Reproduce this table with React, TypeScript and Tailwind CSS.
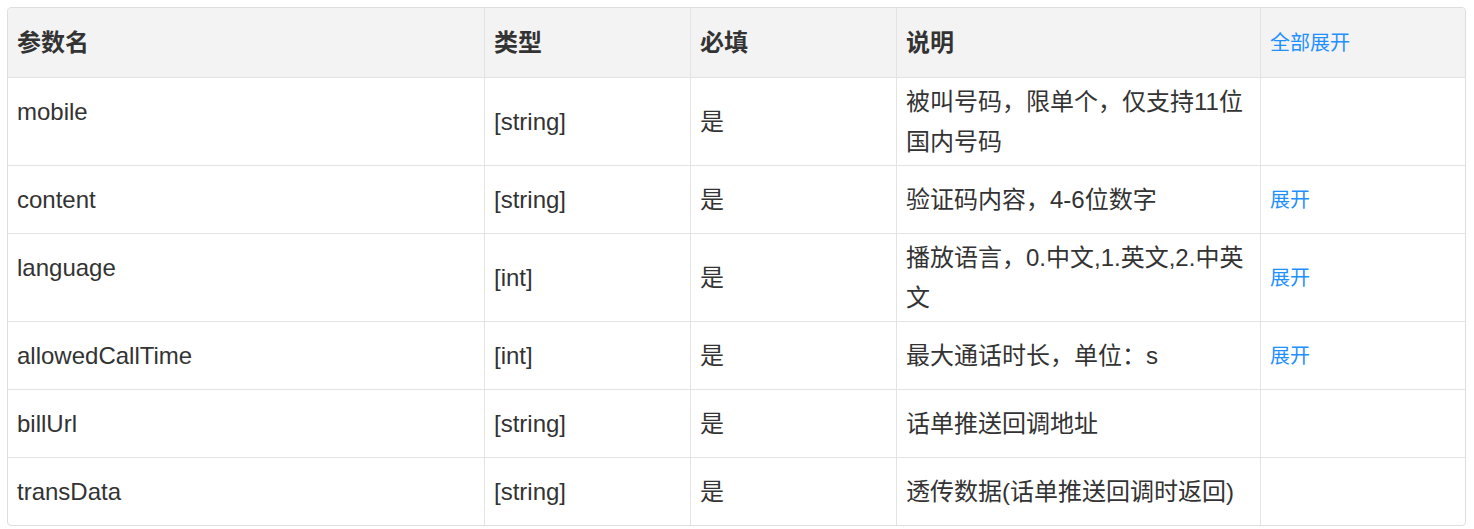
const params = [
  { name: 'mobile', type: '[string]', required: '是', desc: '被叫号码，限单个，仅支持11位国内号码', expand: false },
  { name: 'content', type: '[string]', required: '是', desc: '验证码内容，4-6位数字', expand: true },
  { name: 'language', type: '[int]', required: '是', desc: '播放语言，0.中文,1.英文,2.中英文', expand: true },
  { name: 'allowedCallTime', type: '[int]', required: '是', desc: '最大通话时长，单位：s', expand: true },
  { name: 'billUrl', type: '[string]', required: '是', desc: '话单推送回调地址', expand: false },
  { name: 'transData', type: '[string]', required: '是', desc: '透传数据(话单推送回调时返回)', expand: false },
];

const cols = 'grid grid-cols-[477px_206px_206px_364px_1fr]';

export default function App() {
  return (
    <div
      className="min-h-screen bg-white pt-[7px] pl-[7px] pr-[8px] text-[#333]"
      style={{ fontFamily: '"Liberation Sans", "Noto Sans CJK SC", sans-serif' }}
    >
      <div className="overflow-hidden rounded-[4px] border border-[#dedede]">
        <div className={`${cols} h-[70px] border-b border-[#e3e3e3] bg-[#f3f3f3] text-[24px] font-bold`}>
          <div className="flex items-center border-r border-[#e3e3e3] pl-[9px]">参数名</div>
          <div className="flex items-center border-r border-[#e3e3e3] pl-[9px]">类型</div>
          <div className="flex items-center border-r border-[#e3e3e3] pl-[9px]">必填</div>
          <div className="flex items-center border-r border-[#e3e3e3] pl-[9px]">说明</div>
          <div className="flex items-center pl-[9px] text-[20px] font-normal text-[#1e90ff]">全部展开</div>
        </div>

        {params.map((p, i) => (
          <div
            key={p.name}
            className={`${cols} min-h-[67px] text-[24px] leading-[40px] ${i < params.length - 1 ? 'border-b border-[#e3e3e3] min-h-[68px]' : ''}`}
          >
            <div className="border-r border-[#e3e3e3] pl-[9px] pt-[14px]">{p.name}</div>
            <div className="flex items-center border-r border-[#e3e3e3] pl-[9px]">{p.type}</div>
            <div className="flex items-center border-r border-[#e3e3e3] pl-[9px]">{p.required}</div>
            <div className="flex items-center border-r border-[#e3e3e3] pl-[9px] pr-[9px] pt-[4px] pb-[3px]">
              <span>{p.desc}</span>
            </div>
            <div className="flex items-center pl-[9px] text-[20px] text-[#1e90ff]">
              {p.expand && <span>展开</span>}
            </div>
          </div>
        ))}
      </div>
    </div>
  );
}
